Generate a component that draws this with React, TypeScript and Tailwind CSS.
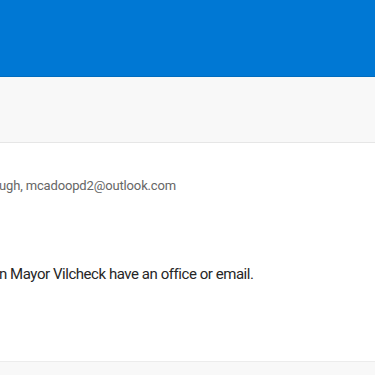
export default function App() {
  return (
    <div className="w-[375px] h-[375px] overflow-hidden bg-white font-['Roboto',sans-serif]">
      <header className="h-[77px] bg-[#0078d4] border-b border-[#006cbe]" />
      <div className="h-[66px] bg-[#f8f8f8] border-b border-[#e6e6e6]" />
      <section className="h-[219px] border-b border-[#ececec] overflow-hidden">
        <p className="mt-[33px] -ml-[1px] text-[13px] leading-[20px] tracking-[-0.15px] text-[#666666] whitespace-nowrap">
          ugh, mcadoopd2@outlook.com
        </p>
        <p className="mt-[67px] -ml-[1px] text-[15px] leading-[22px] tracking-[-0.45px] text-[#262626] whitespace-nowrap">
          n Mayor Vilcheck have an office or email.
        </p>
      </section>
      <div className="h-[20px] bg-[#f8f8f8]" />
    </div>
  );
}
